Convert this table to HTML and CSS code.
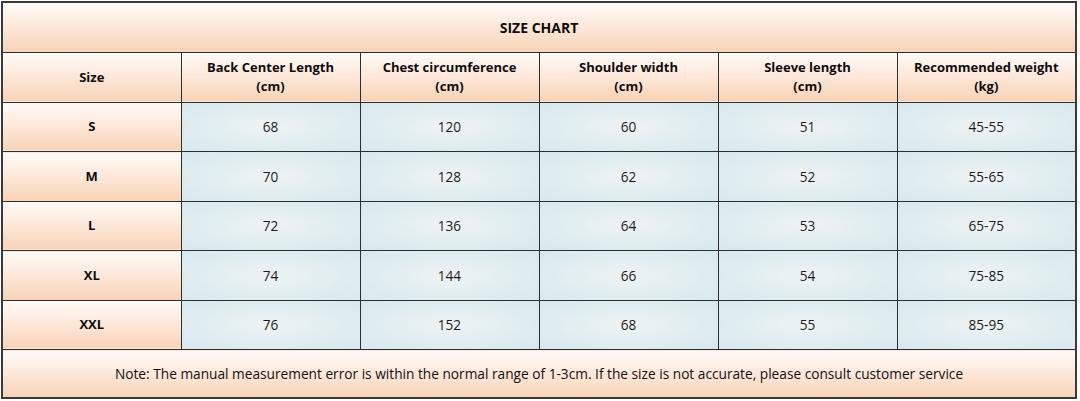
FILE: index.html
```html
<!DOCTYPE html>
<html lang="en">
<head>
<meta charset="utf-8">
<title>Size Chart</title>
<link rel="stylesheet" href="styles.css">
</head>
<body>
<table class="chart">
  <colgroup>
    <col class="c"><col class="c"><col class="c"><col class="c"><col class="c"><col class="c">
  </colgroup>
  <tr class="title-row"><th colspan="6" class="peach title">SIZE CHART</th></tr>
  <tr class="head-row">
    <th class="peach">Size</th>
    <th class="peach">Back Center Length<br>(cm)</th>
    <th class="peach">Chest circumference<br>(cm)</th>
    <th class="peach">Shoulder width<br>(cm)</th>
    <th class="peach">Sleeve length<br>(cm)</th>
    <th class="peach">Recommended weight<br>(kg)</th>
  </tr>
  <tr class="data-row"><th class="peach">S</th><td>68</td><td>120</td><td>60</td><td>51</td><td>45-55</td></tr>
  <tr class="data-row"><th class="peach">M</th><td>70</td><td>128</td><td>62</td><td>52</td><td>55-65</td></tr>
  <tr class="data-row"><th class="peach">L</th><td>72</td><td>136</td><td>64</td><td>53</td><td>65-75</td></tr>
  <tr class="data-row"><th class="peach">XL</th><td>74</td><td>144</td><td>66</td><td>54</td><td>75-85</td></tr>
  <tr class="data-row"><th class="peach">XXL</th><td>76</td><td>152</td><td>68</td><td>55</td><td>85-95</td></tr>
  <tr class="note-row"><td colspan="6" class="peach note">Note: The manual measurement error is within the normal range of 1-3cm. If the size is not accurate, please consult customer service</td></tr>
</table>
</body>
</html>
```

FILE: styles.css
```css
html, body {
  margin: 0;
  padding: 0;
  background: #ffffff;
}
body {
  padding: 1px 0 0 1px;
  font-family: "Open Sans", "Noto Sans", sans-serif;
  color: #111;
}
.chart {
  border-collapse: collapse;
  table-layout: fixed;
  width: 1076px;
  border: 2px solid #3a3a3a;
}
.c {
  width: 179px;
}
th, td {
  border: 1px solid #2e2e2e;
  padding: 0;
  text-align: center;
  vertical-align: middle;
  font-size: 13px;
  line-height: 19px;
}
th {
  font-weight: 700;
  color: #0d0d0d;
}
td {
  color: #1c1c1c;
  font-size: 13.6px;
  background: radial-gradient(ellipse at center, #eef3f4 0%, #e3eef1 45%, #d7e9ee 100%);
}
.peach {
  background: linear-gradient(to bottom, #fffbf8 0%, #fde9dc 45%, #f8d3b6 100%);
}
.title {
  font-size: 14px;
}
.title-row { height: 50px; }
.head-row { height: 50px; }
.data-row { height: 49.5px; }
.note-row { height: 48px; }
.note {
  color: #111;
  font-weight: 400;
  font-size: 13.7px;
}
```
